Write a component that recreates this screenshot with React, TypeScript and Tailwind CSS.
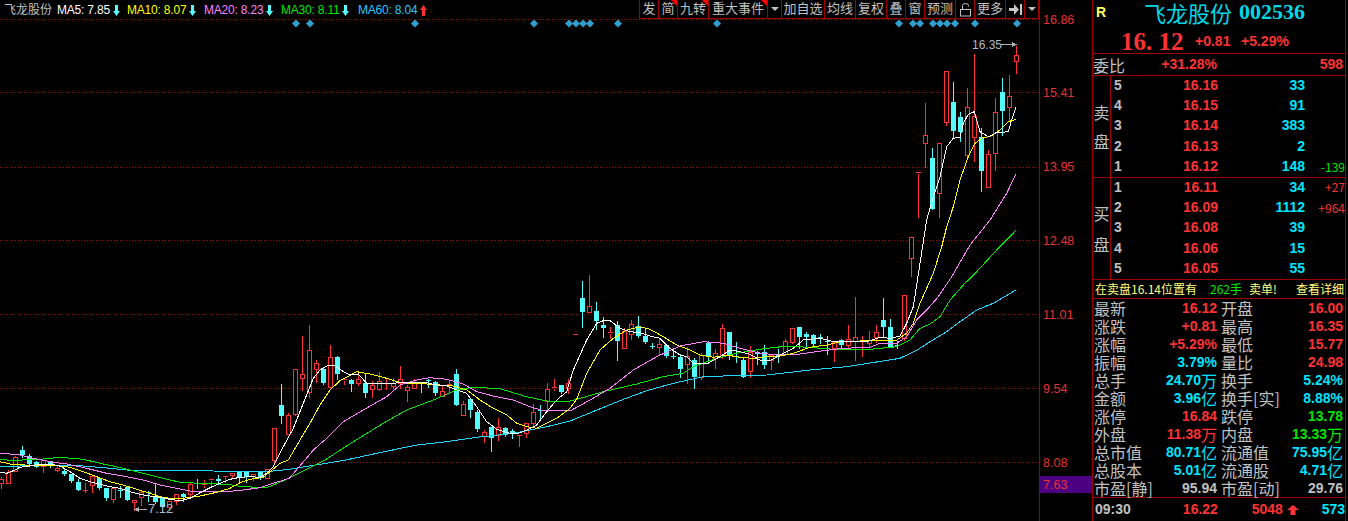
import { ReactNode } from "react"

const CANDLE_RED = "#ff3232"
const CANDLE_CYAN = "#54fcfc"

type RawCandle = [number, number, number, number, number, "r" | "c"]

// x, high, low, body top, body bottom - y is measured at 3x, dy is the crop offset
const candleGroups: { dy: number; items: RawCandle[] }[] = [
    {
        dy: 440,
        items: [
            [1, 108, 143, 118, 130, "r"], [8, 88, 128, 95, 128, "r"], [15, 45, 92, 52, 92, "r"], [22, 15, 50, 30, 45, "c"],
            [29, 40, 75, 47, 72, "c"], [36, 60, 82, 66, 80, "c"], [43, 57, 95, 60, 77, "r"], [50, 60, 80, 63, 78, "c"],
            [57, 75, 92, 84, 90, "r"], [64, 85, 105, 93, 102, "c"], [71, 100, 125, 102, 123, "c"], [78, 115, 150, 125, 150, "c"],
            [85, 125, 155, 150, 151, "r"], [92, 105, 155, 108, 136, "r"], [99, 113, 148, 115, 143, "c"], [106, 145, 180, 145, 175, "c"],
            [113, 140, 185, 145, 178, "r"], [120, 135, 172, 151, 153, "c"], [127, 140, 180, 142, 180, "c"], [134, 178, 210, 181, 187, "r"],
            [141, 150, 195, 156, 172, "r"], [148, 150, 183, 155, 158, "c"], [155, 127, 190, 168, 187, "c"], [162, 170, 200, 170, 200, "c"],
            [169, 180, 210, 184, 200, "r"], [176, 163, 193, 163, 184, "r"], [183, 155, 182, 162, 172, "c"], [190, 122, 168, 132, 163, "r"],
            [197, 113, 143, 130, 133, "c"], [204, 118, 140, 131, 136, "r"], [211, 117, 142, 117, 120, "r"], [218, 103, 133, 117, 123, "c"],
            [225, 105, 125, 107, 109, "r"], [232, 95, 115, 100, 106, "r"], [239, 94, 125, 97, 110, "c"], [246, 94, 125, 97, 110, "c"],
            [253, 100, 120, 103, 108, "r"], [260, 97, 118, 97, 113, "c"], [267, 88, 115, 88, 115, "r"],
        ],
    },
    {
        dy: 310,
        items: [
            [274, 355, 460, 355, 450, "r"], [281, 220, 338, 285, 317, "c"], [288, 306, 371, 316, 371, "r"], [295, 178, 315, 178, 312, "r"],
            [302, 75, 240, 193, 205, "r"], [309, 42, 260, 121, 247, "r"], [316, 148, 215, 160, 176, "r"], [323, 172, 222, 177, 220, "c"],
            [330, 102, 230, 142, 230, "r"], [337, 135, 207, 141, 191, "c"], [344, 203, 222, 207, 210, "r"], [351, 205, 243, 210, 221, "c"],
            [358, 190, 225, 208, 220, "r"], [365, 185, 260, 220, 248, "c"], [372, 210, 260, 225, 238, "r"], [379, 183, 240, 212, 238, "r"],
            [386, 200, 238, 218, 220, "r"], [393, 200, 233, 220, 228, "r"], [400, 165, 233, 206, 218, "r"], [407, 222, 272, 230, 241, "r"],
            [414, 205, 235, 220, 235, "r"], [421, 215, 245, 217, 220, "c"], [428, 205, 232, 211, 213, "c"], [435, 210, 255, 215, 248, "c"],
            [442, 222, 257, 244, 257, "r"], [449, 208, 248, 221, 223, "r"], [456, 174, 285, 192, 284, "c"], [463, 270, 314, 283, 314, "r"],
            [470, 262, 320, 267, 300, "c"], [477, 298, 362, 305, 358, "c"], [484, 357, 395, 367, 378, "r"], [491, 352, 422, 352, 385, "c"],
            [498, 322, 390, 350, 375, "r"], [505, 348, 378, 355, 375, "c"], [512, 353, 383, 363, 370, "c"], [519, 375, 407, 374, 376, "r"],
            [526, 336, 380, 340, 370, "r"], [533, 278, 345, 305, 338, "r"], [540, 283, 325, 299, 301, "c"], [547, 217, 300, 238, 272, "r"],
            [554, 205, 240, 231, 233, "r"], [561, 225, 250, 225, 247, "c"], [568, 205, 250, 220, 233, "r"],
        ],
    },
    {
        dy: 260,
        items: [
            [575, 222, 224, 222, 224, "r"], [582, 60, 200, 114, 155, "c"], [589, 42, 155, 139, 155, "r"], [596, 123, 207, 153, 183, "c"],
            [603, 168, 230, 195, 203, "c"], [610, 197, 235, 217, 220, "r"], [617, 180, 300, 195, 243, "c"], [624, 200, 265, 213, 265, "r"],
            [631, 178, 238, 192, 222, "r"], [638, 165, 232, 198, 227, "c"], [645, 200, 250, 227, 247, "c"], [652, 245, 265, 259, 261, "c"],
            [659, 235, 285, 253, 260, "r"], [666, 255, 290, 255, 287, "c"], [673, 265, 295, 289, 291, "c"], [680, 280, 352, 290, 327, "c"],
            [687, 258, 368, 287, 312, "r"], [694, 290, 383, 300, 350, "c"], [701, 275, 358, 285, 352, "r"], [708, 240, 305, 250, 290, "c"],
            [715, 265, 325, 280, 295, "r"], [722, 190, 295, 205, 285, "r"], [729, 217, 297, 217, 287, "c"], [736, 243, 305, 288, 291, "c"],
            [743, 290, 352, 300, 350, "c"], [750, 255, 350, 277, 332, "r"], [757, 270, 312, 275, 282, "c"], [764, 252, 325, 277, 315, "c"],
            [771, 280, 328, 285, 300, "r"], [778, 265, 305, 286, 288, "c"], [785, 235, 285, 243, 282, "r"], [792, 205, 250, 205, 245, "r"],
            [799, 200, 265, 202, 232, "c"], [806, 212, 258, 222, 232, "c"], [813, 218, 255, 225, 252, "c"], [820, 220, 248, 232, 238, "c"],
            [827, 225, 282, 242, 245, "c"], [834, 240, 302, 247, 265, "r"], [841, 235, 262, 240, 255, "c"], [848, 192, 262, 238, 255, "r"],
            [855, 108, 300, 232, 243, "r"], [862, 225, 287, 240, 242, "r"], [869, 210, 262, 240, 250, "r"], [876, 193, 245, 217, 232, "r"],
            [883, 112, 230, 180, 200, "c"], [890, 174, 262, 200, 262, "c"],
        ],
    },
    {
        dy: 30,
        items: [
            [897, 930, 954, 945, 947, "c"], [904, 796, 930, 796, 924, "r"], [911, 618, 737, 620, 685, "r"], [918, 427, 560, 427, 429, "r"],
            [925, 216, 410, 314, 338, "r"], [932, 350, 536, 384, 536, "c"], [939, 340, 560, 340, 488, "r"], [946, 120, 285, 122, 275, "r"],
            [953, 153, 325, 216, 302, "c"], [960, 244, 332, 262, 305, "c"], [967, 170, 378, 232, 376, "r"], [974, 70, 392, 258, 320, "r"],
            [981, 290, 482, 322, 422, "c"], [988, 358, 470, 373, 470, "r"], [995, 202, 420, 247, 370, "r"], [1002, 140, 315, 186, 242, "c"],
            [1009, 132, 272, 198, 232, "r"], [1016, 44, 128, 76, 92, "r"],
        ],
    },
]

type Pts = number[][]
const toPixels = (dx: number, dy: number, pts: Pts) => pts.map(([x, y]) => `${(x / 3 + dx).toFixed(1)},${(y / 3 + dy).toFixed(1)}`).join(" ")

const maLines: { color: string; parts: [number, number, Pts][] }[] = [
    {
        color: "#20d8ff",
        parts: [
            [0, 440, [[0, 80], [60, 78], [120, 77], [180, 77], [250, 78], [330, 85], [400, 92], [480, 93], [560, 92], [640, 93], [720, 95], [800, 95], [868, 88]]],
            [260, 310, [[258, 450], [350, 430], [470, 405], [560, 395], [650, 382], [760, 370], [860, 350], [930, 333]]],
            [560, 260, [[185, 420], [260, 392], [340, 370], [430, 350], [550, 346], [620, 345], [750, 330], [860, 320], [1020, 295]]],
            [880, 30, [[115, 958], [150, 935], [200, 905], [240, 875], [290, 840], [340, 820], [408, 780]]],
        ],
    },
    {
        color: "#00e600",
        parts: [
            [0, 440, [[0, 58], [40, 62], [90, 58], [130, 57], [180, 52], [250, 58], [310, 72], [370, 85], [430, 100], [490, 115], [540, 127], [600, 130], [680, 133], [730, 140], [800, 143], [860, 118]]],
            [260, 310, [[195, 450], [280, 395], [370, 340], [440, 300], [520, 270], [590, 240], [640, 232], [720, 236], [800, 260], [860, 273], [930, 273]]],
            [560, 260, [[50, 418], [130, 395], [230, 372], [310, 350], [370, 340], [400, 320], [470, 295], [530, 280], [600, 268], [680, 258], [760, 263], [850, 270], [930, 268]]],
            [880, 30, [[0, 955], [50, 950], [90, 930], [120, 895], [150, 882], [180, 860], [210, 810], [250, 765], [290, 725], [350, 660], [390, 620], [408, 600]]],
        ],
    },
    {
        color: "#ff80ff",
        parts: [
            [0, 440, [[0, 40], [30, 42], [60, 45], [100, 55], [150, 65], [200, 72], [260, 85], [320, 100], [380, 110], [430, 120], [480, 135], [530, 145], [580, 155], [630, 155], [680, 155], [730, 150], [780, 143], [820, 130], [868, 115]]],
            [260, 310, [[135, 450], [160, 420], [200, 385], [250, 335], [310, 300], [380, 260], [420, 225], [470, 210], [510, 203], [560, 208], [610, 222], [650, 245], [700, 258], [760, 270], [810, 290], [850, 302], [930, 303]]],
            [560, 260, [[90, 420], [150, 385], [220, 330], [290, 290], [360, 258], [430, 245], [490, 250], [540, 265], [600, 280], [660, 285], [720, 282], [790, 272], [850, 265], [930, 262]]],
            [880, 30, [[0, 940], [50, 940], [80, 920], [110, 870], [140, 840], [175, 800], [215, 740], [270, 645], [330, 570], [380, 490], [408, 432]]],
        ],
    },
    {
        color: "#ffff00",
        parts: [
            [0, 440, [[0, 65], [30, 72], [60, 72], [90, 78], [120, 77], [170, 77], [210, 82], [250, 95], [290, 110], [330, 125], [370, 135], [410, 148], [450, 160], [480, 170], [510, 175], [550, 175], [600, 168], [650, 157], [690, 145], [720, 128], [750, 118], [790, 112], [810, 95], [840, 70]]],
            [260, 310, [[85, 450], [120, 390], [150, 340], [180, 285], [210, 240], [240, 212], [290, 185], [330, 192], [380, 205], [410, 215], [450, 220], [500, 222], [540, 225], [580, 228], [620, 240], [660, 270], [700, 295], [740, 315], [770, 340], [800, 350], [830, 355], [860, 340], [890, 325], [930, 295]]],
            [560, 260, [[50, 418], [80, 340], [120, 270], [160, 235], [200, 210], [240, 200], [270, 208], [310, 230], [350, 255], [390, 270], [420, 285], [460, 292], [500, 285], [540, 292], [580, 295], [620, 290], [660, 288], [700, 280], [750, 262], [800, 255], [840, 245], [900, 243]]],
            [880, 30, [[0, 930], [50, 930], [80, 910], [100, 880], [120, 820], [160, 730], [185, 650], [200, 590], [220, 530], [240, 450], [265, 380], [285, 340], [310, 322], [330, 320], [360, 300], [385, 275], [408, 268]]],
        ],
    },
    {
        color: "#ffffff",
        parts: [
            [0, 440, [[0, 96], [20, 100], [40, 92], [60, 82], [90, 78], [120, 72], [150, 72], [180, 78], [210, 95], [240, 115], [270, 125], [300, 133], [330, 140], [360, 145], [390, 155], [420, 163], [450, 168], [480, 172], [510, 178], [540, 182], [570, 175], [600, 158], [630, 143], [660, 130], [690, 118], [720, 112], [750, 110], [780, 112], [800, 100], [820, 80]]],
            [260, 310, [[50, 450], [70, 410], [100, 355], [130, 280], [160, 205], [180, 180], [200, 168], [225, 166], [250, 185], [270, 195], [295, 192], [320, 220], [350, 222], [390, 220], [430, 218], [470, 218], [500, 218], [530, 225], [560, 228], [590, 240], [620, 250], [650, 290], [680, 335], [710, 358], [740, 368], [770, 372], [800, 360], [830, 345], [860, 305], [890, 270], [920, 245]]],
            [560, 260, [[40, 330], [80, 240], [110, 190], [130, 182], [150, 182], [180, 205], [210, 215], [240, 218], [270, 228], [300, 235], [330, 265], [360, 285], [380, 290], [400, 310], [440, 312], [480, 290], [510, 270], [540, 275], [570, 283], [600, 300], [630, 302], [660, 285], [700, 265], [730, 240], [780, 235], [820, 245], [870, 245], [920, 245], [960, 232]]],
            [880, 30, [[30, 925], [60, 918], [80, 880], [100, 830], [120, 700], [140, 570], [160, 500], [180, 440], [200, 350], [220, 325], [240, 322], [250, 280], [265, 253], [283, 245], [300, 305], [325, 320], [350, 308], [385, 305], [395, 270], [408, 232]]],
        ],
    },
]

const gridRows = [92, 167, 240, 314, 388, 462]
const diamonds = [296, 310, 415, 534, 569, 576, 583, 590, 618, 717, 899, 913, 920, 933, 940, 947, 955, 975, 1017]

const Candles = () => (
    <>
        {candleGroups.flatMap(({ dy, items }) => items.map(([x, hi, lo, top, bottom, kind]) => {
            const px = x + 0.5
            const yHi = Math.round(hi / 3 + dy) + 0.5
            const yLo = Math.round(lo / 3 + dy) + 0.5
            const yTop = Math.round(top / 3 + dy) + 0.5
            const yBot = Math.round(bottom / 3 + dy) + 0.5
            const flat = yBot - yTop < 1.5
            if (kind === "c") {
                return (
                    <g key={x}>
                        <line x1={px} x2={px} y1={yHi} y2={yLo} stroke={CANDLE_CYAN} />
                        <rect x={x - 2} y={yTop - 0.5} width={5} height={Math.max(yBot - yTop, 1)} fill={CANDLE_CYAN} />
                    </g>
                )
            }
            return (
                <g key={x}>
                    <line x1={px} x2={px} y1={yHi} y2={yTop} stroke={CANDLE_RED} />
                    <line x1={px} x2={px} y1={yBot} y2={yLo} stroke={CANDLE_RED} />
                    {flat
                        ? <line x1={x - 2} x2={x + 3} y1={yTop} y2={yTop} stroke={CANDLE_RED} />
                        : <rect x={x - 1.5} y={yTop} width={4} height={yBot - yTop} fill="#000" stroke={CANDLE_RED} />}
                </g>
            )
        }))}
    </>
)

const ChartDrawing = () => (
    <svg width={1039} height={521} className="block" shapeRendering="crispEdges">
        <line x1={0} x2={1039} y1={19.5} y2={19.5} stroke="#a00000" strokeDasharray="1 2" />
        {gridRows.map((y) => (
            <line key={y} x1={0} x2={1039} y1={y + 0.5} y2={y + 0.5} stroke="#a00000" strokeDasharray="1 2" />
        ))}
        {diamonds.map((x) => (
            <polygon key={x} points={`${x - 4},23.5 ${x},19.5 ${x + 4},23.5 ${x},27.5`} fill="#2f9fd0" shapeRendering="auto" />
        ))}
        <Candles />
        {maLines.map((ma) => (
            <polyline
                key={ma.color}
                fill="none"
                stroke={ma.color}
                strokeWidth={1}
                points={ma.parts.map(([dx, dy, pts]) => toPixels(dx, dy, pts)).join(" ")}
            />
        ))}
        <line x1={1001} x2={1014} y1={44.5} y2={44.5} stroke="#b0b0b0" />
        <polygon points="1017,44.5 1012,42 1012,47" fill="#b0b0b0" />
        <line x1={137} x2={147} y1={509.5} y2={509.5} stroke="#b0b0b0" />
        <polygon points="134,509.5 139,507 139,512" fill="#b0b0b0" />
    </svg>
)

const Arrow = ({ up, color }: { up?: boolean; color: string }) => (
    <svg width={7} height={11} viewBox="0 0 7 11" className="ml-[3px]" style={up ? undefined : { transform: "rotate(180deg)" }}>
        <path d="M3.5 0 L7 5 L5 5 L5 11 L2 11 L2 5 L0 5 Z" fill={color} />
    </svg>
)

const legend = [
    { label: "MA5: 7.85", color: "text-white", arrow: "#54fcfc", up: false, width: "w-[70px]" },
    { label: "MA10: 8.07", color: "text-[#ffff00]", arrow: "#54fcfc", up: false, width: "w-[77px]" },
    { label: "MA20: 8.23", color: "text-[#ff80ff]", arrow: "#54fcfc", up: false, width: "w-[77px]" },
    { label: "MA30: 8.11", color: "text-[#00e600]", arrow: "#54fcfc", up: false, width: "w-[77px]" },
    { label: "MA60: 8.04", color: "text-[#2cc8ff]", arrow: "#ff3232", up: true, width: "w-[77px]" },
]

const Legend = () => (
    <div className="absolute left-[4px] top-[2px] flex h-[16px] items-center bg-black">
        <span className="mr-[5px] w-[48px] text-[12px] text-[#c0c0c0]">飞龙股份</span>
        {legend.map((item) => (
            <span key={item.label} className={`flex items-center text-[12px] tracking-[-0.2px] ${item.color} ${item.width}`}>
                {item.label}
                <Arrow up={item.up} color={item.arrow} />
            </span>
        ))}
    </div>
)

const toolbarItems: { label: ReactNode; width: string; flag?: boolean }[] = [
    { label: "发", width: "w-[19px]" },
    { label: "简", width: "w-[19px]", flag: true },
    { label: "九转", width: "w-[31px]", flag: true },
    { label: "重大事件", width: "w-[59px]", flag: true },
    { label: <span className="block h-0 w-0 border-x-[4px] border-t-[4px] border-x-transparent border-t-[#c0c0c0]" />, width: "w-[14px]" },
    { label: "加自选", width: "w-[43px]" },
    { label: "均线", width: "w-[31px]" },
    { label: "复权", width: "w-[31px]" },
    { label: "叠", width: "w-[19px]" },
    { label: "窗", width: "w-[19px]" },
    { label: "预测", width: "w-[31px]" },
    {
        label: (
            <svg width={13} height={15} viewBox="0 0 13 15" fill="none" stroke="#c0c0c0">
                <rect x={1.5} y={7.5} width={10} height={6.5} />
                <path d="M3.5 7 V3.5 Q3.5 1.5 6.5 1.5 Q9.5 1.5 9.5 3.5 V4.5" />
            </svg>
        ),
        width: "w-[19px]",
    },
    { label: "更多", width: "w-[31px]" },
    {
        label: (
            <svg width={13} height={11} viewBox="0 0 13 11" fill="#c8c8c8">
                <path d="M0 4 H5 V0 L10 5.5 L5 11 V7 H0 Z" />
                <rect x={11} y={0} width={2} height={11} />
            </svg>
        ),
        width: "w-[19px]",
    },
    { label: <span className="block h-0 w-0 border-x-[4px] border-t-[4px] border-x-transparent border-t-[#c0c0c0]" />, width: "w-[14px]" },
]

const Toolbar = () => (
    <div className="absolute left-[639px] top-0 flex h-[19px] border-b border-l border-[#a00000] bg-black">
        {toolbarItems.map((item, index) => (
            <div
                key={index}
                className={`relative flex items-center justify-center border-r border-[#a00000] text-[13px] text-[#c0c0c0] ${item.width}`}
            >
                {item.label}
                {item.flag && (
                    <span className="absolute right-0 top-0 h-0 w-0 border-l-[6px] border-t-[6px] border-l-transparent border-t-[#ff0000]" />
                )}
            </div>
        ))}
    </div>
)

const axisPrices = ["15.41", "13.95", "12.48", "11.01", "9.54", "8.08"]

const PriceAxis = () => (
    <div className="flex w-[53px] flex-col border-l border-[#a00000] pl-[3px] text-[12.5px] leading-[14px] text-[#e83030]">
        <div className="h-[73px] pt-[13px]">16.86</div>
        {axisPrices.map((price) => (
            <div key={price} className="h-[74px] pt-[13px]">{price}</div>
        ))}
        <div className="-ml-[3px] -mt-[41px] flex h-[17px] shrink-0 items-center bg-[#4b0082] pl-[3px]">7.63</div>
    </div>
)

const num = "font-['Liberation_Sans',sans-serif] font-bold text-[14px]"

const sellRows = [
    { n: 5, price: "16.16", vol: "33" },
    { n: 4, price: "16.15", vol: "91" },
    { n: 3, price: "16.14", vol: "383" },
    { n: 2, price: "16.13", vol: "2" },
    { n: 1, price: "16.12", vol: "148", change: "-139", changeColor: "text-[#00e600]" },
]
const buyRows = [
    { n: 1, price: "16.11", vol: "34", change: "+27", changeColor: "text-[#ff3232]" },
    { n: 2, price: "16.09", vol: "1112", change: "+964", changeColor: "text-[#ff3232]" },
    { n: 3, price: "16.08", vol: "39" },
    { n: 4, price: "16.06", vol: "15" },
    { n: 5, price: "16.05", vol: "55" },
]

type Quote = { n: number; price: string; vol: string; change?: string; changeColor?: string }

const QuoteBlock = ({ title, rows, titleGap }: { title: [string, string]; rows: Quote[]; titleGap: string }) => (
    <div className="flex h-[102px] border-b border-[#a00000]">
        <div className={`flex w-[18px] flex-col items-center justify-center border-r border-[#a00000] text-[16px] leading-[16px] text-[#c0c0c0] ${titleGap}`}>
            <span>{title[0]}</span>
            <span>{title[1]}</span>
        </div>
        <div className="-mt-[1px] flex flex-1 flex-col">
            {rows.map((row) => (
                <div key={row.n} className="flex h-[20.4px] shrink-0 items-center">
                    <span className={`${num} w-[12px] pl-[3px] text-[#c0c0c0]`}>{row.n}</span>
                    <span className={`${num} w-[95px] text-right text-[#ff3232]`}>{row.price}</span>
                    <span className={`${num} w-[87px] text-right text-[#00e4ff]`}>{row.vol}</span>
                    <span className={`w-[40px] text-right text-[12px] ${row.changeColor ?? ""}`}>{row.change}</span>
                </div>
            ))}
        </div>
    </div>
)

const Unit = ({ children }: { children: string }) => (
    <span className="font-['Noto_Sans_CJK_SC'] text-[16px] font-normal">{children}</span>
)

const red = "text-[#ff3232]"
const cyan = "text-[#00e4ff]"
const green = "text-[#00e600]"
const grey = "text-[#c0c0c0]"

const statRows: [string, string, string, string?, string?, string?, string?, string?][] = [
    ["最新", "16.12", red, undefined, "开盘", "16.00", red, undefined],
    ["涨跌", "+0.81", red, undefined, "最高", "16.35", red, undefined],
    ["涨幅", "+5.29%", red, undefined, "最低", "15.77", red, undefined],
    ["振幅", "3.79%", cyan, undefined, "量比", "24.98", red, undefined],
    ["总手", "24.70", cyan, "万", "换手", "5.24%", cyan, undefined],
    ["金额", "3.96", cyan, "亿", "换手[实]", "8.88%", cyan, undefined],
    ["涨停", "16.84", red, undefined, "跌停", "13.78", green, undefined],
    ["外盘", "11.38", red, "万", "内盘", "13.33", green, "万"],
    ["总市值", "80.71", cyan, "亿", "流通值", "75.95", cyan, "亿"],
    ["总股本", "5.01", cyan, "亿", "流通股", "4.71", cyan, "亿"],
    ["市盈[静]", "95.94", grey, undefined, "市盈[动]", "29.76", grey, undefined],
]

const StatCell = ({ label, value, color, unit, width }: { label: string; value: string; color: string; unit?: string; width: string }) => (
    <div className={`flex items-center justify-between ${width}`}>
        <span className="text-[16px] leading-[18px] text-[#c0c0c0]">{label}</span>
        <span className={`${num} flex items-center ${color}`}>
            {value}
            {unit && <Unit>{unit}</Unit>}
        </span>
    </div>
)

const QuotePanel = () => (
    <div className="flex w-[254px] flex-col border-x border-[#a00000] font-['Noto_Sans_CJK_SC',sans-serif]">
        <div className="h-[54px] border-b border-[#a00000]">
            <div className="flex h-[24px] items-center">
                <span className={`${num} ml-[3px] w-[48px] text-[12px] text-[#ffff60]`}>R</span>
                <span className="text-[22px] leading-[24px] text-[#00d8e8]">飞龙股份</span>
                <span className="ml-[7px] font-['Liberation_Serif',serif] text-[22px] leading-[24px] font-bold text-[#00d8e8]">002536</span>
            </div>
            <div className="flex h-[29px] items-center whitespace-pre pt-[6px]">
                <span className="ml-[28px] w-[74px] font-['Liberation_Serif',serif] text-[25px] leading-[24px] font-bold text-[#ff3232]">16. 12</span>
                <span className={`${num} w-[46px] ${red}`}>+0.81</span>
                <span className={`${num} ${red}`}>+5.29%</span>
            </div>
        </div>
        <div className="flex h-[22px] items-center border-b border-[#a00000]">
            <span className="w-[33px] whitespace-nowrap text-[16px] leading-[18px] text-[#c0c0c0]">委比</span>
            <span className={`${num} w-[91px] text-right ${red}`}>+31.28%</span>
            <span className={`${num} w-[126px] text-right ${red}`}>598</span>
        </div>
        <QuoteBlock title={["卖", "盘"]} rows={sellRows} titleGap="gap-[13px]" />
        <QuoteBlock title={["买", "盘"]} rows={buyRows} titleGap="gap-[15px]" />
        <div className="flex h-[19px] items-center border-b border-[#a00000] pl-[2px] text-[12px] text-[#ffff80]">
            <span className="w-[115px]">在卖盘16.14位置有</span>
            <span className="w-[39px] text-[#00e600]">262手</span>
            <span className="w-[47px]">卖单!</span>
            <span>查看详细</span>
        </div>
        <div className="flex h-[199px] flex-col justify-center border-b border-[#a00000] pl-[1px]">
            {statRows.map(([l1, v1, c1, u1, l2, v2, c2, u2]) => (
                <div key={l1} className="flex h-[18px] items-center">
                    <StatCell label={l1} value={v1} color={c1} unit={u1} width="w-[123px]" />
                    <div className="w-[4px]" />
                    <StatCell label={l2 ?? ""} value={v2 ?? ""} color={c2 ?? ""} unit={u2} width="w-[122px]" />
                </div>
            ))}
        </div>
        <div className={`${num} flex h-[23px] items-center`}>
            <span className={`ml-[2px] w-[88px] ${grey}`}>09:30</span>
            <span className={`w-[69px] ${red}`}>16.22</span>
            <span className={`flex w-[70px] items-center ${red}`}>
                5048
                <svg width={12} height={10} viewBox="0 0 12 10" className="ml-[4px]"><path d="M6 0 L12 5 L8.5 5 L8.5 10 L3.5 10 L3.5 5 L0 5 Z" fill="#ff3232" /></svg>
            </span>
            <span className={cyan}>573</span>
        </div>
    </div>
)

export default function App() {
    return (
        <div className="flex h-[521px] w-[1348px] overflow-hidden bg-black font-['Liberation_Sans','Noto_Sans_CJK_SC',sans-serif]">
            <div className="relative w-[1039px] shrink-0">
                <ChartDrawing />
                <Legend />
                <Toolbar />
                <span className="absolute left-[972px] top-[38px] text-[12px] leading-[14px] text-[#b0b8c8]">16.35</span>
                <span className="absolute left-[148px] top-[502px] text-[13px] leading-[14px] text-[#b0b8c8]">7.12</span>
            </div>
            <PriceAxis />
            <QuotePanel />
        </div>
    )
}
